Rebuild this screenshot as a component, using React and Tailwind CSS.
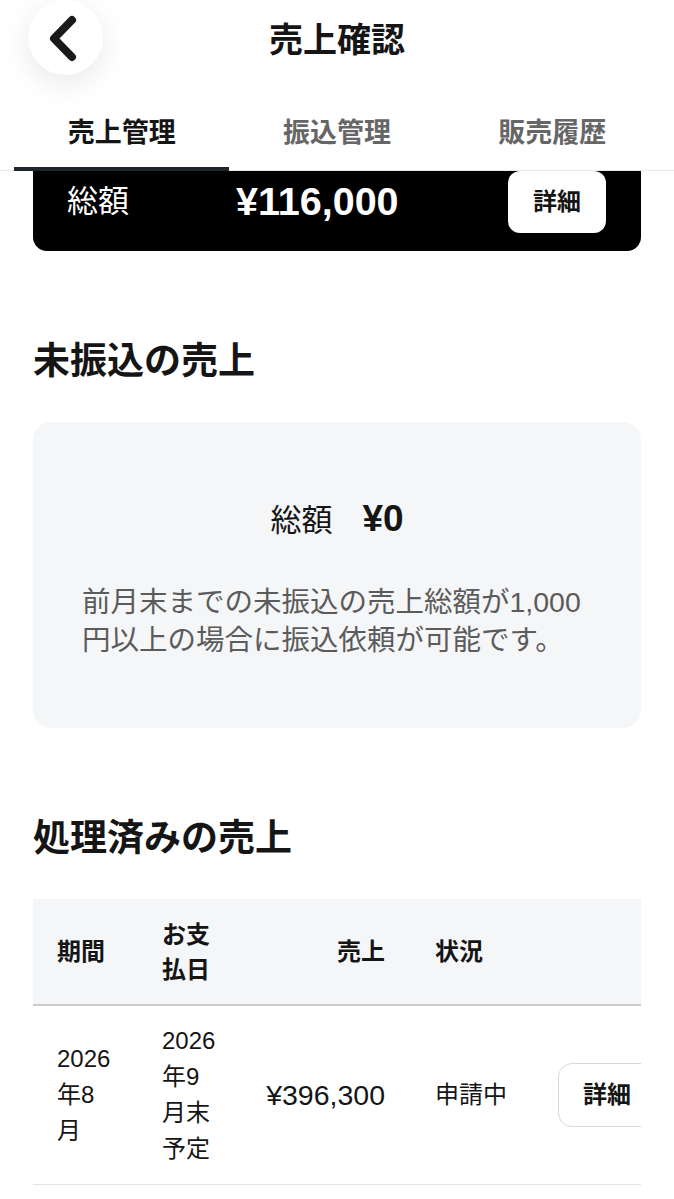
const font = { fontFamily: '"Liberation Sans", "Noto Sans CJK JP", sans-serif' };

const tabs = ['売上管理', '振込管理', '販売履歴'];

export default function App() {
  return (
    <div className="min-h-[1199px] bg-white text-[#151515] overflow-hidden" style={font}>
      {/* Header */}
      <div className="grid grid-cols-[1fr_auto_1fr] h-[96px]">
        <div>
          <button className="ml-[28px] w-[75px] h-[75px] rounded-full bg-white shadow-[0_8px_30px_rgba(0,0,0,0.09)] flex items-center justify-center">
            <svg width="75" height="75" viewBox="0 0 75 75" fill="none">
              <path d="M44 20 L26 38.5 L44 57" stroke="#1a1a1a" strokeWidth="8" strokeLinecap="round" strokeLinejoin="round" />
            </svg>
          </button>
        </div>
        <h1 className="mt-[18px] text-[34px] leading-[44px] font-bold">売上確認</h1>
        <div />
      </div>

      {/* Tabs */}
      <div className="flex px-[14px] border-b border-[#e8e8e8]">
        {tabs.map((t, i) => (
          <div
            key={t}
            className={`flex-1 h-[75px] flex items-center justify-center text-[27px] font-bold -mb-px ${
              i === 0 ? 'text-[#151515] border-b-[4px] border-[#1f2630]' : 'text-[#666666]'
            }`}
          >
            <span className={i === 0 ? 'mt-[4px]' : ''}>{t}</span>
          </div>
        ))}
      </div>

      {/* Total card */}
      <div className="mx-[33px] bg-black rounded-b-[14px] pb-[18px] pl-[34px] pr-[35px] flex items-center">
        <span className="w-[169px] text-white text-[31px]">総額</span>
        <span className="text-white text-[39.5px] font-bold">¥116,000</span>
        <button className="ml-auto w-[98px] h-[62px] bg-white rounded-[12px] text-[24px] font-bold text-[#151515]">詳細</button>
      </div>

      {/* Unpaid */}
      <h2 className="mx-[33px] mt-[87px] text-[37px] leading-[48px] font-bold">未振込の売上</h2>
      <div className="mx-[33px] mt-[36px] bg-[#f5f6f8] rounded-[18px] pt-[76px] pb-[69px] px-[49px]">
        <div className="flex items-baseline justify-center h-[42px] leading-[42px]">
          <span className="text-[31px]">総額</span>
          <span className="ml-[30px] text-[37px] font-bold">¥0</span>
        </div>
        <p className="mt-[43px] text-[28.5px] leading-[38px] text-[#5b5b5b]">
          前月末までの未振込の売上総額が1,000円以上の場合に振込依頼が可能です。
        </p>
      </div>

      {/* Processed */}
      <h2 className="mx-[33px] mt-[87px] text-[37px] leading-[48px] font-bold">処理済みの売上</h2>
      <div className="mx-[33px] mt-[36px] overflow-hidden">
        <div className="w-[661px]">
          <div className="grid grid-cols-[105px_103px_168px_125px_160px] items-center h-[107px] bg-[#f5f6f8] border-b-2 border-[#cccccc] text-[24px] leading-[35px] font-bold">
            <div className="pl-[24px] pr-[25px]">期間</div>
            <div className="pl-[24px] pr-[23px]">お支払日</div>
            <div className="pr-[24px] text-right">売上</div>
            <div className="pl-[26px]">状況</div>
            <div />
          </div>
          <div className="grid grid-cols-[105px_103px_168px_125px_160px] items-center h-[179px] border-b border-[#e3e3e3] text-[24px] leading-[36px]">
            <div className="pl-[24px] pr-[25px]">2026年8月</div>
            <div className="pl-[24px] pr-[23px]">2026年9月末予定</div>
            <div className="pr-[24px] text-right text-[28.5px]">¥396,300</div>
            <div className="pl-[26px]">申請中</div>
            <div className="pl-[24px]">
              <button className="w-[120px] h-[64px] border-[1.5px] border-[#d9d9d9] rounded-[14px] bg-white text-left pl-[24px] text-[24px] font-bold">詳細</button>
            </div>
          </div>
        </div>
      </div>
    </div>
  );
}
